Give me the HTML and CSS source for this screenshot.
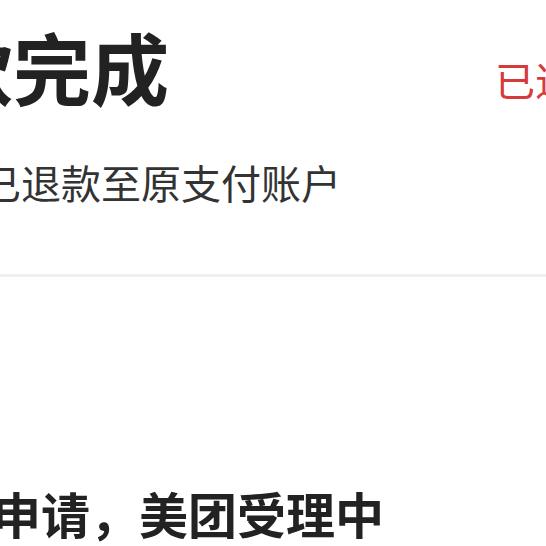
FILE: index.html
```html
<!DOCTYPE html>
<html lang="zh-CN">
<head>
<meta charset="utf-8">
<title>退款完成</title>
<link rel="stylesheet" href="styles.css">
</head>
<body>
<div class="page">
  <div class="head-row">
    <h1 class="title">退款完成</h1>
    <span class="status">已退款</span>
  </div>
  <p class="subtitle">已退款至原支付账户</p>
  <div class="divider"></div>
  <p class="step">提交申请，美团受理中</p>
</div>
</body>
</html>
```
FILE: styles.css
```css
html, body {
  margin: 0;
  padding: 0;
  background: #ffffff;
}
.page {
  width: 546px;
  height: 546px;
  overflow: hidden;
  font-family: "Noto Sans CJK SC", "Noto Sans", sans-serif;
  display: flex;
  flex-direction: column;
}
.head-row {
  display: flex;
  align-items: flex-start;
  gap: 326px;
  padding-top: 27px;
  white-space: nowrap;
}
.title {
  margin: 0 0 0 -143px;
  font-size: 78px;
  line-height: 78px;
  font-weight: 700;
  color: #222222;
  flex-shrink: 0;
}
.status {
  margin-top: 32px;
  font-size: 40px;
  line-height: 40px;
  color: #d63a3a;
  flex-shrink: 0;
}
.subtitle {
  margin: 57px 0 0 -19px;
  font-size: 40px;
  line-height: 40px;
  color: #333333;
  white-space: nowrap;
}
.divider {
  margin-top: 72px;
  height: 3px;
  background: #f0f0f0;
  flex-shrink: 0;
}
.step {
  margin: 211px 0 0 -106px;
  font-size: 49px;
  line-height: 49px;
  font-weight: 700;
  color: #222222;
  white-space: nowrap;
}
```
